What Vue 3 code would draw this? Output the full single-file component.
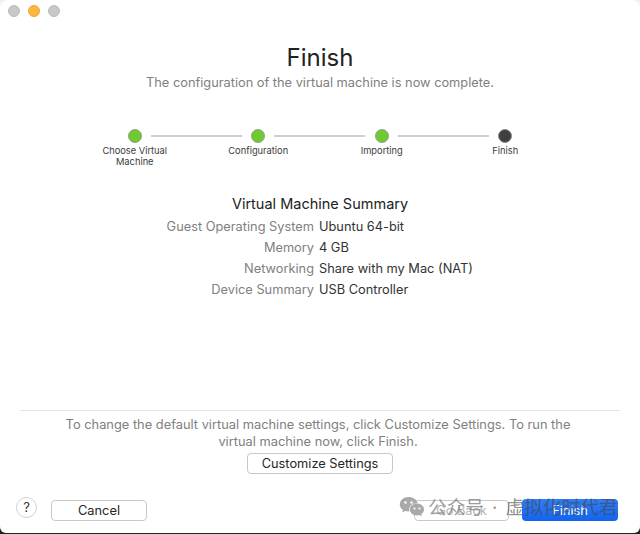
<script setup>
const steps = [
  { label: 'Choose Virtual Machine', done: true },
  { label: 'Configuration', done: true },
  { label: 'Importing', done: true },
  { label: 'Finish', done: false },
];

const summary = [
  { name: 'Guest Operating System', value: 'Ubuntu 64-bit' },
  { name: 'Memory', value: '4 GB' },
  { name: 'Networking', value: 'Share with my Mac (NAT)' },
  { name: 'Device Summary', value: 'USB Controller' },
];
</script>

<template>
  <div class="backdrop">
    <main class="window">
      <div class="lights">
        <span class="light"></span>
        <span class="light light--amber"></span>
        <span class="light"></span>
      </div>

      <header class="heading">
        <h1>Finish</h1>
        <p>The configuration of the virtual machine is now complete.</p>
      </header>

      <ol class="stepper">
        <li v-for="(step, i) in steps" :key="step.label" class="step">
          <span class="step__dot" :class="{ 'step__dot--done': step.done }"></span>
          <span v-if="i < steps.length - 1" class="step__line"></span>
          <span class="step__label">{{ step.label }}</span>
        </li>
      </ol>

      <section class="summary">
        <h2>Virtual Machine Summary</h2>
        <dl>
          <template v-for="row in summary" :key="row.name">
            <dt>{{ row.name }}</dt>
            <dd>{{ row.value }}</dd>
          </template>
        </dl>
      </section>

      <section class="customize">
        <p>To change the default virtual machine settings, click Customize Settings. To run the virtual machine now, click Finish.</p>
        <button class="btn btn--customize">Customize Settings</button>
      </section>

      <footer class="actions">
        <button class="help">?</button>
        <button class="btn btn--cancel">Cancel</button>
        <span class="spacer"></span>
        <button class="btn btn--back">Go Back</button>
        <button class="btn btn--primary">Finish</button>
      </footer>

      <div class="watermark">
        <svg width="26" height="24" viewBox="0 0 26 24">
          <path d="M9.500 1C4.600 1 .8 4.300.8 8.400c0 2.300 1.200 4.300 3.200 5.700L3.200 16.500l2.900-1.500c1 .3 2.100.5 3.400.5.300 0 .6 0 .9 0-.2-.6-.3-1.200-.3-1.900 0-3.800 3.500-6.700 7.800-6.700h.7C17.800 3.400 14 1 9.500 1z" fill="#a9a9a9" />
          <path d="M25 13.500c0-3.300-3.200-5.900-7.100-5.900s-7.100 2.600-7.100 5.900 3.200 5.900 7.100 5.900c.9 0 1.700-.1 2.500-.4l2.400 1.300-.6-2.100c1.700-1.100 2.800-2.800 2.800-4.700z" fill="#a9a9a9" />
          <circle cx="15.500" cy="12.500" r="1.100" fill="#fff" />
          <circle cx="20.500" cy="12.500" r="1.100" fill="#fff" />
          <circle cx="6.500" cy="6.500" r="1.200" fill="#fff" />
          <circle cx="12.500" cy="6.500" r="1.200" fill="#fff" />
        </svg>
        <span class="watermark__a">公众号</span>
        <span class="watermark__dot">·</span>
        <span class="watermark__b">虚拟化时代君</span>
      </div>
    </main>
  </div>
</template>

<style scoped>
.backdrop {
  width: 640px;
  height: 534px;
  background: linear-gradient(#f1f1f1 0 60%, #222 60%);
  overflow: hidden;
}

.window {
  position: relative;
  box-sizing: border-box;
  width: 640px;
  height: 533px;
  display: flex;
  flex-direction: column;
  background: #fff;
  border-radius: 8px 8px 6px 6px;
  font-family: Inter, "Liberation Sans", "Noto Sans CJK SC", sans-serif;
  color: #262626;
}

.lights {
  display: flex;
  gap: 8px;
  padding: 5px 0 0 8px;
  height: 12px;
}

.light {
  box-sizing: border-box;
  width: 12px;
  height: 12px;
  border-radius: 50%;
  background: #c8c8c8;
  border: 1px solid #bcbcbc;
}

.light--amber {
  background: #fdb63e;
  border-color: #e9a73a;
}

.heading {
  margin-top: 26px;
  text-align: center;
}

.heading h1 {
  margin: 0;
  font-size: 24px;
  font-weight: 400;
  line-height: 29px;
  color: #222;
}

.heading p {
  margin: 3px 0 0;
  font-size: 12.800px;
  line-height: 16px;
  color: #808080;
}

.stepper {
  display: flex;
  justify-content: center;
  margin: 38px 0 0;
  padding: 0;
  list-style: none;
}

.step {
  position: relative;
  width: 123.500px;
  display: flex;
  flex-direction: column;
  align-items: center;
}

.step__dot {
  box-sizing: border-box;
  width: 14px;
  height: 14px;
  border-radius: 50%;
  background: #3f3f3f;
  border: 1px solid #8c8c8c;
}

.step__dot--done {
  background: #6fc92f;
  border-color: #8fa487;
}

.step__line {
  position: absolute;
  top: 6px;
  left: calc(50% + 16px);
  width: 91px;
  height: 2px;
  background: #cfcfcf;
}

.step__label {
  margin-top: 2px;
  width: 80px;
  font-size: 9.300px;
  line-height: 11px;
  text-align: center;
  color: #3c3c3c;
}

.summary {
  margin-top: 28px;
}

.summary h2 {
  margin: 0 0 3px;
  font-size: 14.500px;
  font-weight: 400;
  line-height: 18px;
  text-align: center;
  color: #222;
}

.summary dl {
  display: grid;
  grid-template-columns: 314px 1fr;
  column-gap: 5px;
  row-gap: 0;
  margin: 0;
  font-size: 12.800px;
  line-height: 21px;
}

.summary dt {
  text-align: right;
  color: #808080;
}

.summary dd {
  margin: 0;
  color: #333;
}

.customize {
  margin: auto 20px 0;
  border-top: 1px solid #e4e4e4;
  padding-top: 5px;
  display: flex;
  flex-direction: column;
  align-items: center;
}

.customize p {
  margin: 0 4px 0 0;
  width: 530px;
  font-size: 12.850px;
  line-height: 17px;
  text-align: center;
  color: #808080;
}

.btn {
  box-sizing: border-box;
  height: 21px;
  padding: 0;
  border: 1px solid #c9c9c9;
  border-radius: 4px;
  background: #fff;
  font-family: inherit;
  font-size: 12.800px;
  color: #262626;
}

.btn--customize {
  width: 146px;
  margin-top: 3px;
}

.actions {
  display: flex;
  align-items: center;
  margin: 25px 0 0;
  padding: 0 22px 12px 16px;
}

.help {
  box-sizing: border-box;
  width: 21px;
  height: 21px;
  padding: 0;
  border: 1px solid #cfcfcf;
  border-radius: 50%;
  background: #fff;
  font-family: inherit;
  font-size: 13px;
  color: #333;
  margin-top: -6px;
}

.btn--cancel {
  width: 96px;
  margin-left: 14px;
}

.spacer {
  flex: 1;
}

.btn--back {
  width: 95px;
  color: #b5b5b5;
}

.btn--primary {
  width: 96px;
  height: 22px;
  margin-left: 13px;
  border: 0;
  background: linear-gradient(#2f7df6, #1264ee);
  color: #fff;
}

.watermark {
  position: absolute;
  left: 399px;
  top: 496px;
  display: flex;
  align-items: center;
  white-space: nowrap;
  font-size: 18.700px;
  line-height: 24px;
  pointer-events: none;
}

.watermark__a {
  margin-left: 3px;
  color: rgba(130, 130, 130, 0.8);
}

.watermark__dot {
  margin: 0 8px;
  color: rgba(120, 120, 120, 0.8);
}

.watermark__b {
  color: rgba(70, 70, 70, 0.62);
}
</style>

<style>
html,
body {
  margin: 0;
  background: #222;
}
</style>
